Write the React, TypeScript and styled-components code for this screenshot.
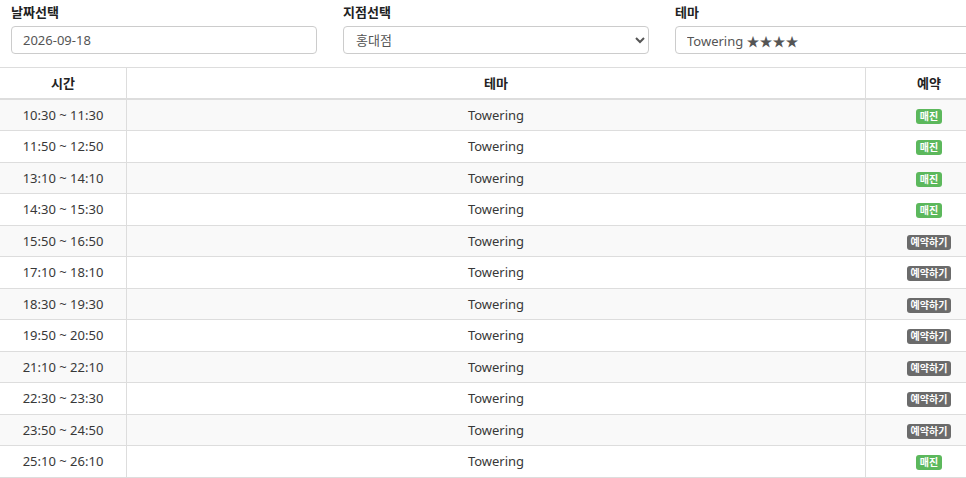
import React from 'react'
import styled, { createGlobalStyle } from 'styled-components'

const GlobalStyle = createGlobalStyle`
    html, body {
        margin: 0;
        padding: 0;
        background: #fff;
        overflow: hidden;
    }
    body {
        font-family: "Noto Sans", "Noto Sans CJK KR", sans-serif;
        font-size: 13px;
        line-height: 18px;
        color: #383838;
    }
`

const Page = styled.div`
    width: 996px;
`

const FormRow = styled.div`
    display: grid;
    grid-template-columns: repeat(3, 332px);
    padding-top: 3px;
`

const Field = styled.div`
    display: flex;
    flex-direction: column;
    padding-left: 11px;
`

const Label = styled.label`
    font-weight: bold;
    font-size: 13px;
    line-height: 18px;
    margin-bottom: 5px;
    color: #222;
`

const TextInput = styled.input`
    box-sizing: border-box;
    width: 306px;
    height: 28px;
    padding: 0 11px;
    border: 1px solid #ccc;
    border-radius: 4px;
    font-family: inherit;
    font-size: 13px;
    color: #555;
    background: #fff;
    outline: none;
`

const Select = styled.select`
    box-sizing: border-box;
    width: 306px;
    height: 28px;
    padding: 0 8px;
    border: 1px solid #ccc;
    border-radius: 4px;
    font-family: inherit;
    font-size: 13px;
    color: #555;
    background: #fff;
    outline: none;
`

const Table = styled.table`
    width: 992px;
    margin-top: 13px;
    border-collapse: collapse;
    border-top: 1px solid #ddd;
`

const Th = styled.th<{ $w?: number }>`
    width: ${(p) => (p.$w ? `${p.$w}px` : 'auto')};
    height: 30px;
    padding: 0;
    font-weight: bold;
    font-size: 13px;
    color: #222;
    text-align: center;
    border-left: 1px solid #ddd;
    border-bottom: 2px solid #ddd;
    &:first-child {
        border-left: none;
    }
`

const Tr = styled.tr`
    &:nth-child(odd) {
        background: #f9f9f9;
    }
`

const Td = styled.td`
    box-sizing: border-box;
    height: 31.5px;
    padding: 0;
    line-height: 18px;
    text-align: center;
    border-left: 1px solid #ddd;
    border-bottom: 1px solid #ddd;
    &:first-child {
        border-left: none;
    }
`

const Badge = styled.span<{ $soldOut: boolean }>`
    display: inline-block;
    padding: 1px 4px 2px;
    border-radius: 3px;
    font-family: "Noto Sans CJK KR", sans-serif;
    font-size: 10px;
    font-weight: bold;
    line-height: 12px;
    color: #fff;
    background: ${(p) => (p.$soldOut ? '#5cb85c' : '#6b6b6b')};
    vertical-align: middle;
`

const slots: { time: string; soldOut: boolean }[] = [
    { time: '10:30 ~ 11:30', soldOut: true },
    { time: '11:50 ~ 12:50', soldOut: true },
    { time: '13:10 ~ 14:10', soldOut: true },
    { time: '14:30 ~ 15:30', soldOut: true },
    { time: '15:50 ~ 16:50', soldOut: false },
    { time: '17:10 ~ 18:10', soldOut: false },
    { time: '18:30 ~ 19:30', soldOut: false },
    { time: '19:50 ~ 20:50', soldOut: false },
    { time: '21:10 ~ 22:10', soldOut: false },
    { time: '22:30 ~ 23:30', soldOut: false },
    { time: '23:50 ~ 24:50', soldOut: false },
    { time: '25:10 ~ 26:10', soldOut: true },
]

const App = (): JSX.Element => {
    return (
        <Page>
            <GlobalStyle />
            <FormRow>
                <Field>
                    <Label>날짜선택</Label>
                    <TextInput type='text' value='2026-09-18' readOnly />
                </Field>
                <Field>
                    <Label>지점선택</Label>
                    <Select defaultValue='hongdae'>
                        <option value='hongdae'>홍대점</option>
                    </Select>
                </Field>
                <Field>
                    <Label>테마</Label>
                    <TextInput type='text' value='Towering ★★★★' readOnly />
                </Field>
            </FormRow>
            <Table>
                <thead>
                    <tr>
                        <Th $w={126}>시간</Th>
                        <Th>테마</Th>
                        <Th $w={126}>예약</Th>
                    </tr>
                </thead>
                <tbody>
                    {slots.map((slot) => (
                        <Tr key={slot.time}>
                            <Td>{slot.time}</Td>
                            <Td>Towering</Td>
                            <Td>
                                <Badge $soldOut={slot.soldOut}>
                                    {slot.soldOut ? '매진' : '예약하기'}
                                </Badge>
                            </Td>
                        </Tr>
                    ))}
                </tbody>
            </Table>
        </Page>
    )
}

export default App
